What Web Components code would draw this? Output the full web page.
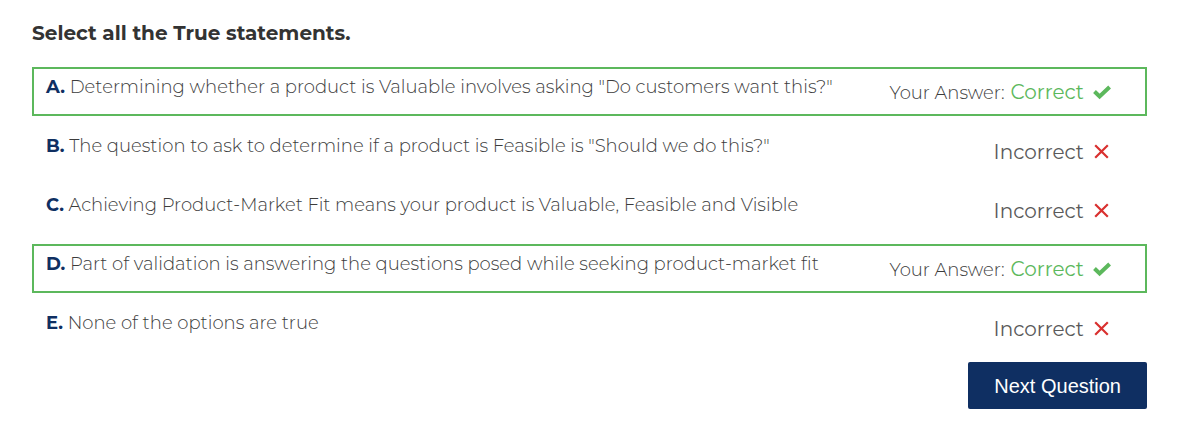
<!DOCTYPE html>
<html lang="en">
<head>
<meta charset="utf-8">
<title>Quiz</title>
<style>
body { margin: 0; background: #fff; font-family: Montserrat, Inter, sans-serif; }
</style>
</head>
<body>
<quiz-question>
  <span slot="title">Select all the True statements.</span>
  <quiz-option letter="A" result="correct" chosen>Determining whether a product is Valuable involves asking "Do customers want this?"</quiz-option>
  <quiz-option letter="B" result="incorrect">The question to ask to determine if a product is Feasible is "Should we do this?"</quiz-option>
  <quiz-option letter="C" result="incorrect">Achieving Product-Market Fit means your product is Valuable, Feasible and Visible</quiz-option>
  <quiz-option letter="D" result="correct" chosen>Part of validation is answering the questions posed while seeking product-market fit</quiz-option>
  <quiz-option letter="E" result="incorrect">None of the options are true</quiz-option>
  <quiz-button slot="actions">Next Question</quiz-button>
</quiz-question>

<template id="question-template">
<style>
:host { display: block; padding: 20px 30px 22px 32px; }
h2 { margin: 0 0 21px; font-size: 20px; line-height: 26px; font-weight: 700; color: #333; }
.options { display: flex; flex-direction: column; gap: 10px; }
.actions { display: flex; justify-content: flex-end; margin-top: 10px; }
</style>
<h2><slot name="title"></slot></h2>
<div class="options" role="list"><slot></slot></div>
<div class="actions"><slot name="actions"></slot></div>
</template>

<template id="option-template">
<style>
:host { display: flex; justify-content: space-between; gap: 24px; box-sizing: border-box; min-height: 49px; padding: 6px 33px 6px 12px; border: 2px solid transparent; color: #3c3c3c; font-size: 18px; line-height: 24px; font-weight: 300; }
:host([result="correct"]) { border-color: #5cb85c; }
b { color: #0f2f62; font-weight: 700; }
.status { display: flex; align-items: baseline; flex: none; align-self: center; padding-top: 2px; }
.yours { margin-right: 6px; }
.result { font-size: 20px; font-weight: 400; color: #5a5a5a; }
:host([result="correct"]) .result { color: #5cb85c; }
.yours, .check, .cross { display: none; }
:host([chosen]) .yours { display: inline; }
:host([result="correct"]) .check, :host([result="incorrect"]) .cross { display: block; }
svg { width: 20px; height: 20px; margin-left: 8px; align-self: center; }
</style>
<div class="text"><b></b> <slot></slot></div>
<div class="status">
  <span class="yours">Your Answer:</span><span class="result"></span>
  <svg class="check" viewBox="0 0 20 20" aria-hidden="true"><path d="M2.5 8.5 7.6 13.4 17.6 4" fill="none" stroke="#5cb85c" stroke-width="4"/></svg>
  <svg class="cross" viewBox="0 0 20 20" aria-hidden="true"><path d="M3.2 3.2 15.8 15.8M15.8 3.2 3.2 15.8" fill="none" stroke="#d9302f" stroke-width="2.2"/></svg>
</div>
</template>

<template id="button-template">
<style>
:host { display: block; }
button { display: block; margin: 0; padding: 13px 26px 11px; border: 0; border-radius: 2px; background: #0f2f62; color: #fff; font: 20px/23px "Liberation Sans", Arial, sans-serif; cursor: pointer; }
</style>
<button type="button"><slot></slot></button>
</template>

<script>
class TemplateElement extends HTMLElement {
  constructor() {
    super();
    const template = document.getElementById(this.constructor.template);
    this.attachShadow({ mode: "open" }).append(template.content.cloneNode(true));
  }
}
class QuizQuestion extends TemplateElement { static template = "question-template"; }
class QuizButton extends TemplateElement { static template = "button-template"; }
class QuizOption extends TemplateElement {
  static template = "option-template";
  connectedCallback() {
    this.setAttribute("role", "listitem");
    this.shadowRoot.querySelector("b").textContent = this.getAttribute("letter") + ".";
    this.shadowRoot.querySelector(".result").textContent =
      this.getAttribute("result") === "correct" ? "Correct" : "Incorrect";
  }
}
customElements.define("quiz-question", QuizQuestion);
customElements.define("quiz-option", QuizOption);
customElements.define("quiz-button", QuizButton);
</script>
</body>
</html>
